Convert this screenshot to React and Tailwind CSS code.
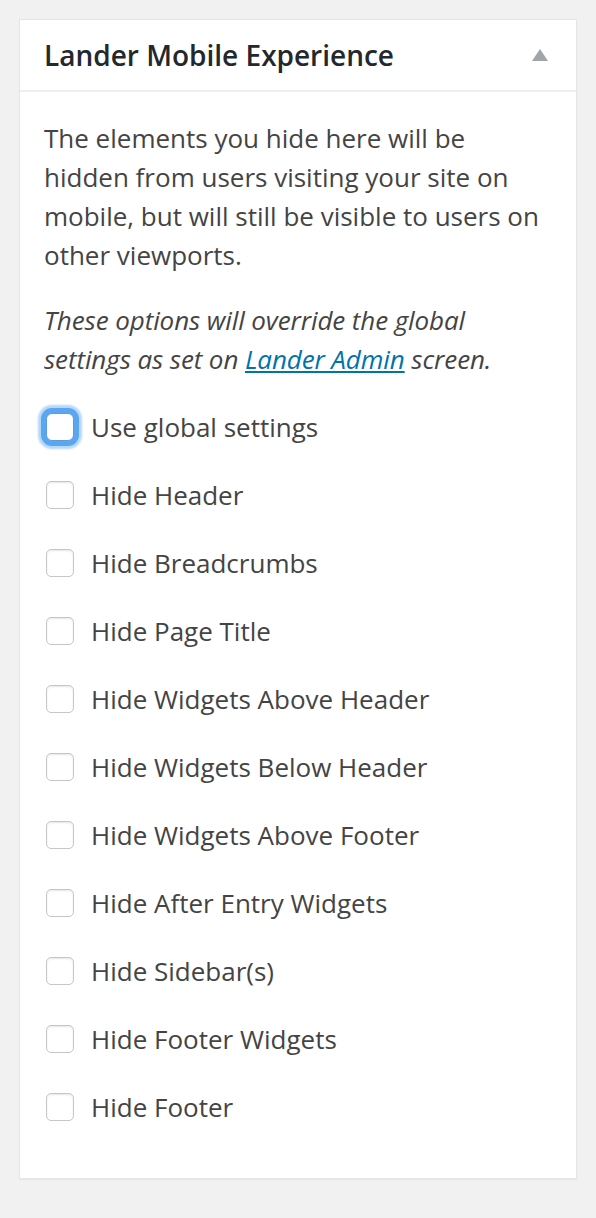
import React from 'react';

const items = [
    'Hide Header',
    'Hide Breadcrumbs',
    'Hide Page Title',
    'Hide Widgets Above Header',
    'Hide Widgets Below Header',
    'Hide Widgets Above Footer',
    'Hide After Entry Widgets',
    'Hide Sidebar(s)',
    'Hide Footer Widgets',
    'Hide Footer',
];

const App = () => {
    return (
        <div className="min-h-[1218px] bg-[#f1f1f1] pt-[19px] px-[19px] font-['Open_Sans',sans-serif]">
            <div className="w-[558px] bg-white border border-[#e5e5e5] shadow-[0_1px_1px_rgba(0,0,0,0.04)]">
                <div className="h-[72px] flex items-center justify-between pl-[24px] pr-[28px] border-b-2 border-[#eeeeee]">
                    <h2 className="text-[28px] font-semibold text-[#23282d] leading-none">Lander Mobile Experience</h2>
                    <svg width="16" height="12" viewBox="0 0 16 12">
                        <polygon points="8,0 16,12 0,12" fill="#a0a5aa" />
                    </svg>
                </div>
                <div className="px-[24px] pt-[27px] pb-[37px] text-[26px] leading-[39px] text-[#444]">
                    <p>The elements you hide here will be hidden from users visiting your site on mobile, but will still be visible to users on other viewports.</p>
                    <p className="italic mt-[26px] tracking-[-0.1px]">
                        These options will override the global settings as set on <a href="#" className="text-[#0073aa] underline">Lander Admin</a> screen.
                    </p>
                    <div className="mt-[14px] flex flex-col">
                        <label className="h-[68px] flex items-center gap-[17px]">
                            <span className="w-[28px] h-[28px] shrink-0 ml-[2px] rounded-[6px] bg-white border border-[#5b9dd9] shadow-[0_0_0_5px_#5ba6f0,0_0_2px_8px_rgba(91,166,240,0.45)]"></span>
                            <span>Use global settings</span>
                        </label>
                        {items.map((t) => (
                            <label key={t} className="h-[68px] flex items-center gap-[17px]">
                                <span className="w-[28px] h-[28px] shrink-0 ml-[2px] rounded-[5px] bg-white border border-[#c4c7ca] shadow-[inset_0_1px_2px_rgba(0,0,0,0.1)]"></span>
                                <span>{t}</span>
                            </label>
                        ))}
                    </div>
                </div>
            </div>
        </div>
    );
};

export default App;
